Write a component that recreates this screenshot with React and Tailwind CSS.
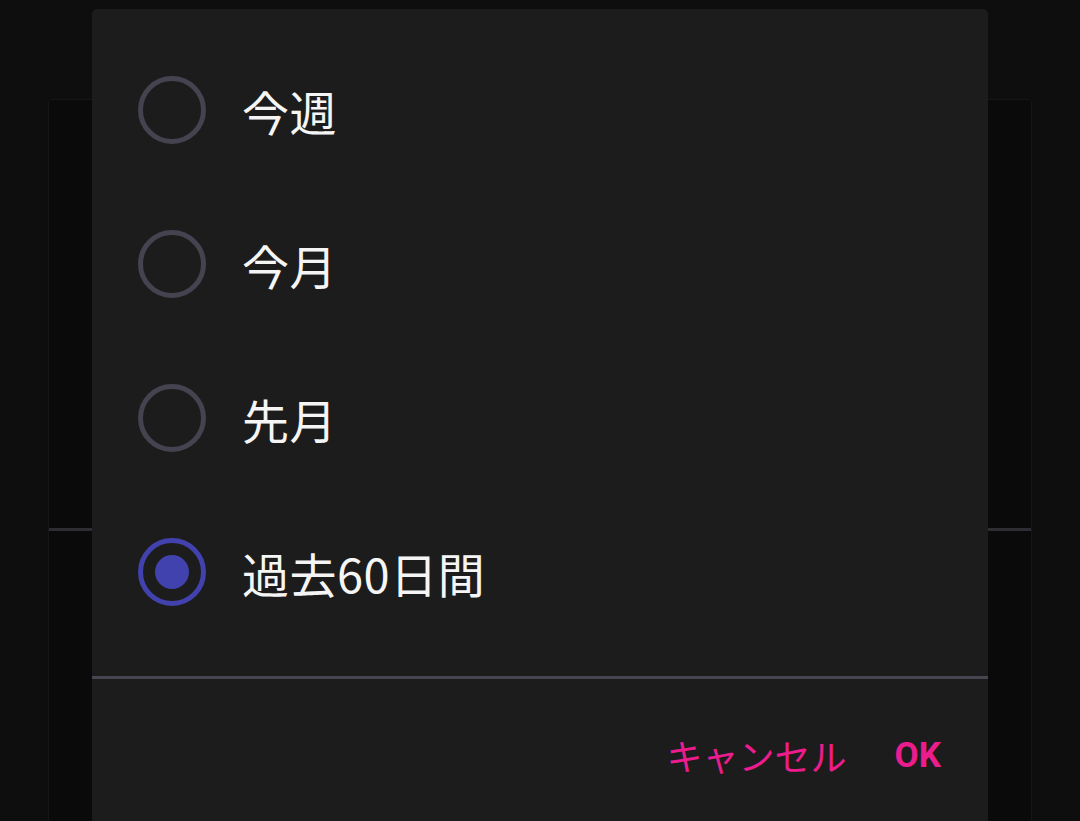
import React from "react";

const options = [
  { label: "今週", selected: false },
  { label: "今月", selected: false },
  { label: "先月", selected: false },
  { label: "過去60日間", selected: true },
];

function Radio({ selected }) {
  if (selected) {
    return (
      <div className="w-[68px] h-[68px] rounded-full border-[5px] border-[#4242ae] flex items-center justify-center shrink-0">
        <div className="w-[34px] h-[34px] rounded-full bg-[#4242ae]" />
      </div>
    );
  }
  return <div className="w-[68px] h-[68px] rounded-full border-[5px] border-[#45434f] shrink-0" />;
}

export default function App() {
  return (
    <div
      className="relative w-[1080px] h-[821px] overflow-hidden bg-[#0e0e0e]"
      style={{ fontFamily: '"Noto Sans CJK JP", "Noto Sans", sans-serif' }}
    >
      <div className="pt-[99px] px-[48px]">
        <div className="h-[760px] rounded-t-[4px] border border-[#161616] bg-[#0a0a0a] flex flex-col">
          <div className="h-[428px]" />
          <div className="h-[3px] bg-[#2e2d33]" />
        </div>
      </div>

      <div className="absolute left-[92px] top-[9px] w-[896px] h-[830px] rounded-t-[5px] bg-[#1c1c1c] flex flex-col">
        <div className="pt-[24px] flex flex-col">
          {options.map((o) => (
            <div key={o.label} className="h-[154px] flex items-center pl-[46px]">
              <Radio selected={o.selected} />
              <span className="ml-[36px] text-[47px] leading-none text-[#f5f5f5] tracking-[0.5px]">
                {o.label}
              </span>
            </div>
          ))}
        </div>
        <div className="mt-[27px] h-[3px] bg-[#47454f]" />
        <div className="h-[152px] flex items-center justify-end pr-[47px]">
          <span className="text-[36px] leading-none text-[#ec1c8e]">キャンセル</span>
          <span
            className="ml-[48px] text-[35px] leading-none font-bold text-[#ec1c8e]"
            style={{ fontFamily: 'Roboto, "Noto Sans", sans-serif' }}
          >
            OK
          </span>
        </div>
      </div>
    </div>
  );
}
